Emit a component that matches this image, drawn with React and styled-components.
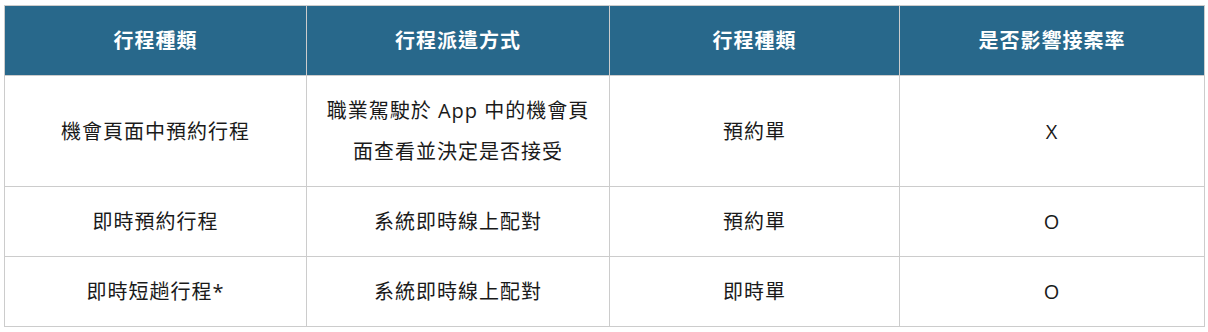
import React from 'react'
import styled, { createGlobalStyle } from 'styled-components'

const GlobalStyle = createGlobalStyle`
  body {
    margin: 0;
    background: #fff;
    font-family: "Open Sans", "Noto Sans CJK TC", sans-serif;
  }
`

const Wrap = styled.div`
  padding: 5px 4px;
`

const Table = styled.table`
  width: 1200px;
  border-collapse: collapse;
  table-layout: fixed;
`

const Head = styled.th`
  background: #28688b;
  color: #fff;
  font-size: 20px;
  font-weight: 700;
  letter-spacing: 1px;
  line-height: 41px;
  padding: 14px 10px;
  border: 1px solid #cccccc;
  text-align: center;
`

const Cell = styled.td`
  color: #1a1a1a;
  font-size: 20px;
  letter-spacing: 1px;
  line-height: 41px;
  padding: 14px 10px;
  border: 1px solid #cccccc;
  text-align: center;
  vertical-align: middle;
`

const columns = ['行程種類', '行程派遣方式', '行程種類', '是否影響接案率']
const widths = [302, 303, 290, 305]

const rows = [
  ['機會頁面中預約行程', '職業駕駛於 App 中的機會頁面查看並決定是否接受', '預約單', 'X'],
  ['即時預約行程', '系統即時線上配對', '預約單', 'O'],
  ['即時短趟行程*', '系統即時線上配對', '即時單', 'O'],
]

const App = () => {
  return (
    <Wrap>
      <GlobalStyle />
      <Table>
        <colgroup>
          {widths.map((w, i) => <col key={i} style={{ width: w }} />)}
        </colgroup>
        <thead>
          <tr>
            {columns.map((c, i) => <Head key={i}>{c}</Head>)}
          </tr>
        </thead>
        <tbody>
          {rows.map((r, i) => (
            <tr key={i}>
              {r.map((c, j) => <Cell key={j}>{c}</Cell>)}
            </tr>
          ))}
        </tbody>
      </Table>
    </Wrap>
  )
}

export default App
